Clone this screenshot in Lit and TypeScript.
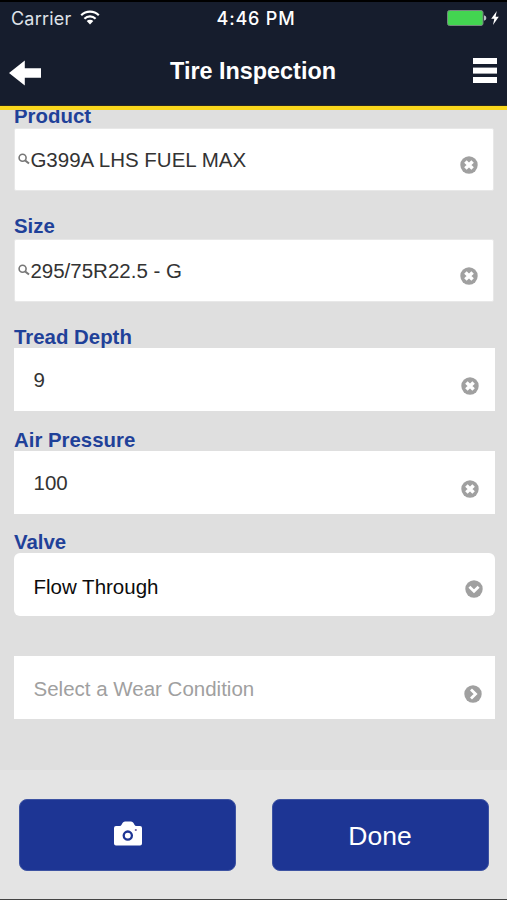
import { LitElement, html, css, svg, nothing } from "lit";
import { customElement, property } from "lit/decorators.js";

type Icon = "clear" | "down" | "right";

const glyphs = {
  clear: svg`<path d="M5.4 5.4 12.6 12.6M12.6 5.4 5.4 12.6" stroke="#fff" stroke-width="3.5"/>`,
  down: svg`<path d="M4.4 6.7 9 11.3 13.6 6.7" fill="none" stroke="#fff" stroke-width="2.7"/>`,
  right: svg`<path d="M7 4.4 11.6 9 7 13.6" fill="none" stroke="#fff" stroke-width="2.8"/>`,
};

@customElement("form-field")
class FormField extends LitElement {
  @property() label = "";
  @property() value = "";
  @property() icon: Icon = "clear";
  @property({ type: Boolean }) search = false;

  static styles = css`
    :host { display: block; }
    .label { height: 23px; line-height: 24px; font-size: 20.4px; font-weight: 700; color: #1f4199; white-space: nowrap; padding-left: 0.5px; }
    .box {
      display: flex; align-items: center; box-sizing: border-box; height: 63px;
      padding: 0 15.5px 0 20px; background: #fff; color: #333; font-size: 20.5px;
    }
    :host([search]) .label { height: var(--label-height, 25px); padding-left: 0; }
    :host([search]) .box { height: 63px; margin: 0 1px 0 0; padding: 0 14.5px 0 3px; border: 1px solid #e8e8e8; border-radius: 2px; }
    :host([select]) .box { border-radius: 6px; color: #0c0c0c; padding-right: 11.5px; }
    :host([placeholder]) .box { color: #a0a0a0; padding-right: 12.5px; }
    .text { flex: 1; white-space: pre; padding-top: 1px; }
    :host([search]) .text { margin-left: 0.4px; padding-top: 0; }
    .lens { width: 12px; height: 12px; flex: none; margin-top: -2px; }
    .badge { width: 18px; height: 18px; flex: none; margin-top: 12px; }
    :host([search]) .badge { margin-top: 11px; }
    :host([select]) .badge { margin-top: 8px; }
    :host([select]) .text { padding-top: 4px; }
    :host([placeholder]) .text { padding-top: 2px; }
  `;

  render() {
    return html`
      ${this.label ? html`<div class="label">${this.label}</div>` : nothing}
      <div class="box">
        ${this.search
          ? html`<svg class="lens" viewBox="0 0 12 12" fill="none" stroke="#777">
              <circle cx="4.6" cy="4.8" r="3.5" stroke-width="1.6" /><path d="M7.2 7.4 11 10.6" stroke-width="2" />
            </svg>`
          : nothing}
        <span class="text">${this.value}</span>
        <svg class="badge" viewBox="0 0 18 18"><circle cx="9" cy="9" r="8.7" fill="#a0a0a0" />${glyphs[this.icon]}</svg>
      </div>
    `;
  }
}

@customElement("app-root")
class AppRoot extends LitElement {
  static styles = css`
    :host {
      display: flex; flex-direction: column; box-sizing: border-box; height: 900px; overflow: hidden;
      background: #dfdfdf; font-family: "Liberation Sans", Arial, sans-serif; border-bottom: 1px solid #444;
    }
    .top { flex: none; height: 110px; box-sizing: border-box; background: #161d2d; color: #fff; border-top: 2px solid #000; border-bottom: 4px solid #f9d71c; box-shadow: inset 0 -1px #2c2a1c; }
    .status { display: grid; grid-template-columns: 1fr auto 1fr; align-items: center; height: 32px; padding: 0 8px 0 11px; font-family: Inter, sans-serif; font-size: 18px; }
    .carrier { display: flex; align-items: center; gap: 9px; color: #dfe2e8; letter-spacing: 0.2px; }
    .wifi { width: 20px; height: 15px; margin-top: -2px; }
    .time { font-weight: 500; letter-spacing: 0.8px; margin-left: 2px; }
    .power { display: flex; justify-content: flex-end; align-items: center; }
    .battery { width: 40px; height: 16px; margin-right: 1px; }
    .bolt { width: 8px; height: 14px; margin-left: 3px; }
    .nav { display: grid; grid-template-columns: 1fr auto 1fr; align-items: center; height: 72px; padding: 0 10px 0 9px; }
    .back { width: 32px; height: 26px; margin-top: 5px; }
    .title { font-weight: 700; font-size: 23.4px; line-height: 28px; margin-top: 1px; }
    .menu { width: 24px; height: 25px; justify-self: end; }
    .form { flex: none; height: 660px; box-sizing: border-box; overflow: hidden; padding: 0 12.5px 0 13.5px; }
    .fields { display: flex; flex-direction: column; margin-top: -6px; }
    .f-product, .f-size { padding-left: 0.5px; }
    .f-product { --label-height: 24px; }
    .f-size { margin-top: 23px; }
    .f-tread { margin-top: 23px; }
    .f-air { margin-top: 17px; }
    .f-valve { margin-top: 16px; }
    .f-wear { margin-top: 40px; }
    .actions { flex: 1; display: grid; grid-template-columns: 217px 217px; column-gap: 36px; padding: 29px 0 0 19px; background: #e4e4e4; }
    .button {
      display: flex; align-items: center; justify-content: center; height: 72px; box-sizing: border-box; padding: 0;
      border: 1px solid #3d53a2; border-radius: 8px; background: #1d3594; color: #fff; font: 26.5px "Liberation Sans", Arial, sans-serif;
    }
    .done { padding-top: 3px; padding-right: 1px; }
    .camera { width: 28px; height: 25px; margin-top: -4px; }
  `;

  render() {
    return html`
      <header class="top">
        <div class="status">
          <div class="carrier">
            <span>Carrier</span>
            <svg class="wifi" viewBox="0 0 20 15" fill="none" stroke="#fff" stroke-width="2.2">
              <path d="M1.2 5.3A12.6 12.6 0 0 1 18.8 5.3M4.4 8.7A8 8 0 0 1 15.6 8.7" />
              <path d="M6.7 11A4.7 4.7 0 0 1 13.3 11L10 14.5Z" fill="#fff" stroke="none" />
            </svg>
          </div>
          <span class="time">4:46 PM</span>
          <div class="power">
            <svg class="battery" viewBox="0 0 40 16">
              <rect x=".5" y=".5" width="35.5" height="15" rx="2" fill="#43d551" stroke="#75877f" />
              <path d="M37 5.3Q39.4 5.8 39.4 8T37 10.7Z" fill="#b8bdc4" />
            </svg>
            <svg class="bolt" viewBox="0 0 8 14"><path d="M5.8 0 .2 7.8H3.3L2 14 7.8 5.7H4.6Z" fill="#fff" /></svg>
          </div>
        </div>
        <div class="nav">
          <svg class="back" viewBox="0 0 32 26"><path d="M0 13 15.8.5V8.3H32V17.8H15.8V25.5Z" fill="#fff" /></svg>
          <span class="title">Tire Inspection</span>
          <svg class="menu" viewBox="0 0 24 25" fill="#fff">
            <rect width="24" height="6" /><rect y="9.6" width="24" height="6" /><rect y="19" width="24" height="6" />
          </svg>
        </div>
      </header>
      <main class="form">
        <div class="fields">
          <form-field class="f-product" search label="Product" value="G399A LHS FUEL MAX"></form-field>
          <form-field class="f-size" search label="Size" value="295/75R22.5 - G"></form-field>
          <form-field class="f-tread" label="Tread Depth" value="9"></form-field>
          <form-field class="f-air" label="Air Pressure" value="100"></form-field>
          <form-field class="f-valve" select label="Valve" value="Flow Through" icon="down"></form-field>
          <form-field class="f-wear" placeholder value="Select a Wear Condition" icon="right"></form-field>
        </div>
      </main>
      <footer class="actions">
        <button class="button" aria-label="Camera">
          <svg class="camera" viewBox="0 0 28 25">
            <path d="M2 5H5.5Q7 5 7.7 3.5L8.5 2Q9.3.4 11 .4H17Q18.7.4 19.5 2L20.3 3.5Q21 5 22.5 5H26Q28 5 28 7V22.6Q28 24.6 26 24.6H2Q0 24.6 0 22.6V7Q0 5 2 5Z" fill="#fff" />
            <circle cx="13.8" cy="14.6" r="4.1" fill="#fff" stroke="#1d3594" stroke-width="2.3" />
            <circle cx="21.8" cy="9" r="1.1" fill="#6a5a9c" />
          </svg>
        </button>
        <button class="button done">Done</button>
      </footer>
    `;
  }
}
